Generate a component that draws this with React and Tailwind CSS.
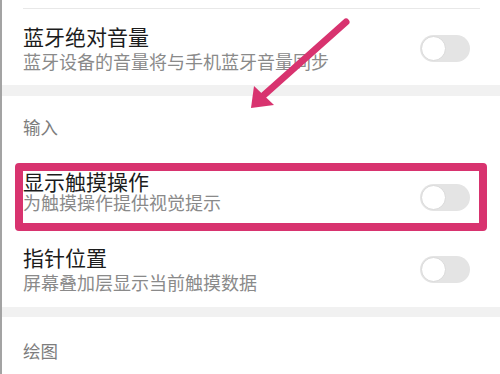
import React from "react";

const Toggle = () => {
  return (
    <div className="w-[50px] h-[27px] rounded-full bg-[#e4e4e4] p-[1px] flex items-center shrink-0">
      <div className="w-[25px] h-[25px] rounded-full bg-white border border-[#d9d9d9]" />
    </div>
  );
};

const Row = ({ title, sub, className = "" }) => {
  return (
    <div className={`flex items-center justify-between pl-[21px] pr-[30px] ${className}`}>
      <div>
        <div className="text-[21px] leading-[26px] text-[#1c1c1c]">{title}</div>
        <div className="text-[18px] leading-[24px] text-[#8a8a8a]">{sub}</div>
      </div>
      <Toggle />
    </div>
  );
};

export default function App() {
  return (
    <div className="relative w-[500px] h-[374px] overflow-hidden bg-white border-l-2 border-[#a3a3a3] [font-family:'Noto_Sans_CJK_SC','Noto_Sans',sans-serif]">
      <div className="h-[8px]" />
      <div className="ml-[21px] mr-[20px] h-px bg-[#e8e8e8]" />

      <Row
        title="蓝牙绝对音量"
        sub="蓝牙设备的音量将与手机蓝牙音量同步"
        className="pt-[14px] pb-[12px]"
      />

      <div className="h-[11px] bg-[#f1f1f1]" />

      <div className="pl-[21px] pt-[19px] pb-[24px] text-[17.5px] leading-[24px] text-[#7d7d7d]">
        输入
      </div>

      {/* highlighted row */}
      <div className="mx-[13px] h-[68px] border-[8px] border-[#d8336f] rounded-[4px] flex items-center justify-between pr-[9px]">
        <div className="self-start">
          <div className="text-[21px] leading-[20px] text-[#1c1c1c]">显示触摸操作</div>
          <div className="text-[18px] leading-[22px] text-[#8a8a8a]">为触摸操作提供视觉提示</div>
        </div>
        <Toggle />
      </div>

      <Row
        title="指针位置"
        sub="屏幕叠加层显示当前触摸数据"
        className="pt-[13px] pb-[13px]"
      />

      <div className="h-[10px] bg-[#f1f1f1]" />

      <div className="pl-[21px] pt-[22px] text-[17.5px] leading-[24px] text-[#7d7d7d]">
        绘图
      </div>

      <svg
        className="absolute -left-[2px] top-0 pointer-events-none"
        width="500"
        height="374"
        viewBox="0 0 500 374"
      >
        <line x1="346" y1="22" x2="264" y2="95" stroke="#d8336f" strokeWidth="7" strokeLinecap="round" />
        <polygon points="251,108 254,86 274,105" fill="#d8336f" />
      </svg>
    </div>
  );
}
